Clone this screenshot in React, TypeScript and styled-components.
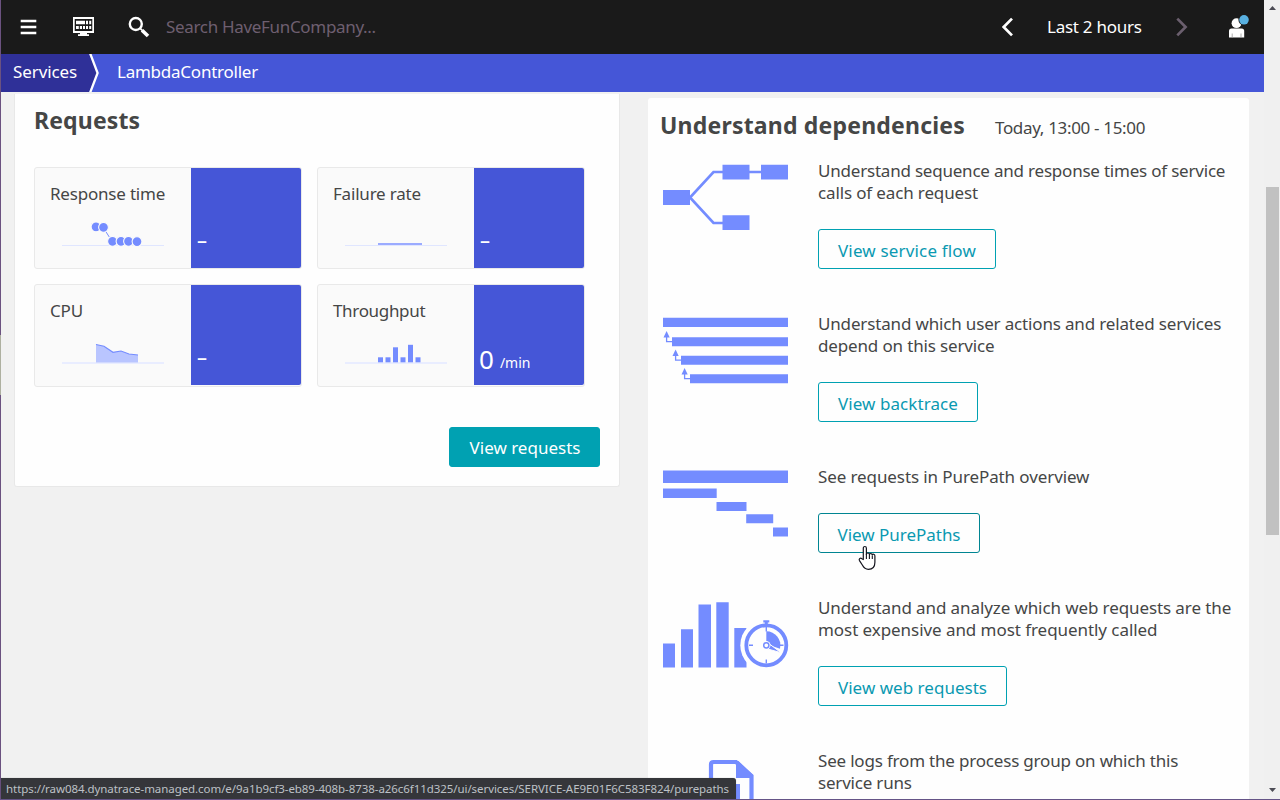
import React from "react";
import styled, { createGlobalStyle } from "styled-components";

const BLUE = "#4556d7";
const ACCENT = "#748cff";
const TEAL = "#00a1b2";

const GlobalStyle = createGlobalStyle`
  * { box-sizing: border-box; }
  html, body { margin: 0; padding: 0; }
  body {
    font-family: "Noto Sans", "Open Sans", sans-serif;
    font-size: 17px;
    line-height: 22px;
    color: #454646;
    overflow: hidden;
  }
  svg { display: block; flex: none; }
`;

const Frame = styled.div`
  position: relative;
  display: flex;
  width: 1280px;
  height: 800px;
  padding-left: 1px;
  border-bottom: 1px solid #655487;
  background:
    linear-gradient(#6b5280 335px, #aeb0a0 335px 395px, #6b5280 395px) 0 0 / 1px 100% no-repeat,
    #f1f1f1;
  overflow: hidden;
`;

const Page = styled.div`
  display: flex;
  flex-direction: column;
  width: 1263px;
  height: 799px;
`;

const Label = styled.span<{ $track?: number }>`
  letter-spacing: ${(p) => p.$track ?? 0}px;
  white-space: pre;
`;

const TopBar = styled.header`
  display: flex;
  flex: none;
  align-items: center;
  height: 54px;
  padding: 0 17px 0 19px;
  background: #1a1a1a;
  color: #fff;
`;

const IconButton = styled.button<{ $gap: number }>`
  display: flex;
  padding: 0;
  margin: 0 ${(p) => p.$gap}px 0 0;
  border: 0;
  background: none;
`;

const SearchField = styled.div`
  flex: 1;
  color: #6e5f70;
`;

const Timeframe = styled.div`
  width: 95px;
  margin-right: 34px;
`;

const Breadcrumb = styled.nav`
  display: flex;
  flex: none;
  height: 38px;
  background: ${BLUE};
  color: #fff;
  line-height: 36px;
`;

const Crumb = styled.div<{ $root?: boolean }>`
  padding-left: ${(p) => (p.$root ? 12 : 18)}px;
  width: ${(p) => (p.$root ? "88px" : "auto")};
  background: ${(p) => (p.$root ? "#2f3098" : "transparent")};
`;

const Content = styled.main`
  display: flex;
  flex: 1;
  align-items: flex-start;
  padding-left: 13px;
  min-height: 0;
`;

const RequestsCard = styled.section`
  width: 606px;
  height: 393px;
  margin-top: 2px;
  padding: 12px 19px 0;
  border: 1px solid #e8e8e8;
  border-top: 0;
  border-radius: 0 0 3px 3px;
  background: #fefefe;
`;

const DependenciesCard = styled.section`
  width: 601px;
  height: 701px;
  margin: 6px 0 0 28px;
  padding: 13px 12px 0;
  border-radius: 3px 3px 0 0;
  background: #fefefe;
  overflow: hidden;
`;

const Title = styled.h2<{ $track?: number }>`
  margin: 0;
  font-size: 23px;
  font-weight: 700;
  line-height: 28px;
  letter-spacing: ${(p) => p.$track ?? 0}px;
`;

const Tiles = styled.div`
  display: grid;
  grid-template-columns: 268px 268px;
  grid-template-rows: 102px 103px;
  gap: 15px;
  margin-top: 33px;
`;

const Tile = styled.article`
  display: flex;
  border: 1px solid #e9e9e9;
  border-radius: 3px;
  background: #fafafa;
`;

const TileInfo = styled.div`
  display: flex;
  flex-direction: column;
  justify-content: space-between;
  width: 156px;
  padding: 15px 0 14px 15px;
  height: 100px;
`;

const TileValue = styled.div`
  display: flex;
  align-items: flex-end;
  gap: 6px;
  width: 110px;
  height: 100px;
  padding: 0 0 10px 5px;
  border-radius: 0 2px 2px 0;
  background: ${BLUE};
  color: #fff;
  font-size: 26px;
  line-height: 32px;
`;

const Dash = styled.span`
  padding: 0 0 8px 1px;
  font-size: 20px;
  font-weight: 500;
  line-height: 20px;
`;

const Unit = styled.span`
  padding-bottom: 1px;
  font-size: 14px;
  line-height: 22px;
`;

const CardActions = styled.div`
  display: flex;
  justify-content: flex-end;
  margin-top: 40px;
`;

const Button = styled.button<{ $primary?: boolean; $hover?: boolean; $width: number }>`
  display: block;
  width: ${(p) => p.$width}px;
  height: 40px;
  padding: ${(p) => (p.$primary ? "2px 0 0 1px" : "4px 0 0")};
  border: 1px solid ${(p) => (p.$hover ? "#008592" : TEAL)};
  border-radius: 3px;
  background: ${(p) => (p.$primary ? TEAL : "#fefefe")};
  color: ${(p) => (p.$primary ? "#fff" : "#0a99b1")};
  font: inherit;
`;

const DependenciesHead = styled.div`
  display: flex;
  align-items: baseline;
  gap: 30px;
  height: 49px;
`;

const Dependency = styled.article`
  display: flex;
  gap: 30px;
  padding: 0 0 44px 3px;
`;

const Drawing = styled.div`
  width: 125px;
  padding-top: 4px;
`;

const Description = styled.p`
  margin: 0 0 25px;
`;

const ScrollBar = styled.div`
  display: flex;
  flex-direction: column;
  align-items: center;
  justify-content: space-between;
  width: 16px;
  height: 799px;
  padding: 5px 0 6px 1px;
  background: #f0f0f0;
`;

const Thumb = styled.div`
  width: 13px;
  height: 348px;
  margin-bottom: 77px;
  background: #c1c1c1;
`;

const StatusBubble = styled.div`
  position: absolute;
  left: 1px;
  bottom: 0;
  width: 735px;
  height: 21px;
  padding-left: 5px;
  border-radius: 0 3px 0 0;
  background: #35363a;
  box-shadow: 0 0 1px rgba(0, 0, 0, 0.4);
  color: #bdc1c6;
  font-size: 11.5px;
  line-height: 21px;
`;

const Pointer = styled.div`
  position: absolute;
  left: 857px;
  top: 545px;
`;

const MenuIcon = () => (
  <svg width="17" height="16" viewBox="0 0 17 16">
    <path d="M.7 2h15.6M.7 8h15.6M.7 14h15.6" stroke="#fff" strokeWidth="2.3" />
  </svg>
);

const DashboardIcon = () => (
  <svg width="21" height="20" viewBox="0 0 21 20">
    <path d="M0 0h21v16h-7v1.3h2V19H5v-1.7h2V16H0z" fill="#fff" />
    <path d="M1.7 2h17.6v12H1.7z" fill="#1a1a1a" />
    <path d="M3 3.800h9V7.200H3zM13 3.800h2V7.200h-2zM16.200 3.800h2V7.200h-2zM3 9h2.800v3H3zM6.800 9h2.200v3H6.800zM10 9h2v3h-2zM13 9h2v3h-2zM16.200 9h2v3h-2z" fill="#fff" />
  </svg>
);

const SearchIcon = () => (
  <svg width="22" height="22" viewBox="0 0 22 22">
    <circle cx="7.8" cy="8" r="6" fill="none" stroke="#fff" strokeWidth="2.4" />
    <path d="m12.2 12.4 2 2" stroke="#fff" strokeWidth="1.8" />
    <path d="m14 14.2 6 5.8" stroke="#fff" strokeWidth="3.6" />
  </svg>
);

const Chevron = ({ forward }: { forward?: boolean }) => (
  <svg width="12" height="20" viewBox="0 0 12 20">
    <path
      d={forward ? "M1.3 1.6 9.6 10l-8.3 8.4" : "M10 1.6 1.7 10l8.3 8.4"}
      fill="none"
      stroke={forward ? "#6b5f6e" : "#fff"}
      strokeWidth="2.7"
    />
  </svg>
);

const UserIcon = () => (
  <svg width="20" height="24" viewBox="0 0 20 24">
    <circle cx="7.5" cy="8.2" r="4.9" fill="#fff" />
    <path d="M0 16q0-2.500 2.500-2.500h10.200q2.500 0 2.500 2.500v6.500H0z" fill="#fff" />
    <path d="M3.200 18.500v4M12 18.500v4" stroke="#999" strokeWidth=".8" />
    <circle cx="15" cy="4.800" r="5.600" fill="#1a1a1a" />
    <circle cx="15" cy="4.800" r="4.800" fill="#58b0e0" />
  </svg>
);

const CrumbArrow = () => (
  <svg width="10" height="38" viewBox="0 0 10 38">
    <path d="M0 0 8.500 19 0 38z" fill="#2f3098" />
    <path d="M1 -1 8.600 19 1 39" fill="none" stroke="#fff" strokeWidth="2.300" />
  </svg>
);

const SPARK_DOTS = [[34.5, 6.800], [42, 7.300], [51, 21.300], [59.500, 21.300], [67, 21.300], [75.500, 21.600]];
const SPARK_BARS = [[33, 5], [40.500, 5], [48, 15], [55.500, 5], [63, 17.500], [70.500, 5]];

const SparkLine = ({ kind }: { kind: string }) => {
  const flat = kind === "dots" || kind === "line";
  return (
    <svg width="130" height="34" viewBox="0 0 130 34">
      <path d={flat ? "M12 25.500h102" : "M12 26h102"} stroke={flat ? "#e0e6ff" : "#e9edff"} strokeWidth={flat ? 1 : 2} />
      {kind === "dots" && (
        <g transform="translate(11.500 0)">
          <path d="M42 8l9 14" stroke={ACCENT} strokeWidth="1" />
          {SPARK_DOTS.map(([x, y]) => (
            <circle key={x} cx={x} cy={y} r="4.900" fill={ACCENT} stroke="#fafafa" strokeWidth="1.100" />
          ))}
        </g>
      )}
      {kind === "line" && <path d="M45 24h44" stroke="#9babff" strokeWidth="2" />}
      {kind === "area" && (
        <>
          <path d="M46 7.500l8 1.800 9 6 8-1.300 8 3 9 1V25.500H46z" fill="#b9c5ff" />
          <path d="M46 7.500l8 1.800 9 6 8-1.300 8 3 9 1" fill="none" stroke={ACCENT} strokeWidth="1.100" />
        </>
      )}
      {kind === "bars" &&
        SPARK_BARS.map(([x, h]) => (
          <rect key={x} x={x + 12} y={25.300 - h} width="5" height={h} fill={ACCENT} />
        ))}
    </svg>
  );
};

const FlowDrawing = () => (
  <svg width="125" height="68" viewBox="0 0 125 68" fill={ACCENT}>
    <path d="M0 26h27v15H0zM59.500 .8h27v14.700h-27zM98 .8h27v14.700H98zM59.500 51.200h27V66h-27z" />
    <path d="M86 8h12M60 8h-9.500L27 33.500 50.500 59H60" fill="none" stroke={ACCENT} strokeWidth="2.700" />
  </svg>
);

const BacktraceDrawing = () => (
  <svg width="125" height="68" viewBox="0 0 125 68" fill={ACCENT}>
    <path d="M0 .700h125v9.200H0zM9 20.300h116v9H9zM18 38.700h107v9H18zM27 57.200h98v9H27z" />
    {[0, 1, 2].map((i) => (
      <g key={i} transform={`translate(${i * 9} ${i * 18.500})`}>
        <path d="M3.600 14 6.700 20.500H.5z" />
        <path d="M3.600 18v6.700H9" fill="none" stroke={ACCENT} strokeWidth="1.300" />
      </g>
    ))}
  </svg>
);

const PurePathDrawing = () => (
  <svg width="125" height="68" viewBox="0 0 125 68" fill={ACCENT}>
    <path d="M0 .600h125v12.300H0zM0 18.400h53.700v9.500H0zM53.500 32.100h30v9h-30zM83.200 44.300h27v9h-27zM110 57.400h15v9h-15z" />
  </svg>
);

const WebRequestsDrawing = () => (
  <svg width="126" height="68" viewBox="0 0 126 68" fill={ACCENT}>
    <path d="M0 42.500h12v24H0zM18 28.300h12v38.200H18zM35.500 3.500H48v63H35.500zM53.300 1.300h12.400v65.200H53.300zM71.300 27h12.200v39.500H71.300z" />
    <circle cx="103.300" cy="44.300" r="26" fill="#fefefe" />
    <circle cx="103.300" cy="44.300" r="20" fill="none" stroke={ACCENT} strokeWidth="3.800" />
    <path d="M100.300 19.300h6v2.300h-1.500v3h-3v-3h-1.500z" />
    <path d="M103.300 30.500V26M103.300 58.500v4M86 44.300h4M116.500 44.300h4" stroke={ACCENT} strokeWidth="1.400" />
    <path d="M103.300 30.300a14 14 0 0 1 13.700 17.400L103.300 43z" />
    <path d="M104.500 41.500 118 51.700 103 47.500z" fill={ACCENT} stroke="#fefefe" strokeWidth="1" />
    <circle cx="103.300" cy="44.300" r="4.200" fill="#fefefe" />
    <circle cx="103.300" cy="44.300" r="2.600" fill="#fefefe" stroke={ACCENT} strokeWidth="1.500" />
  </svg>
);

const LogsDrawing = () => (
  <svg width="125" height="68" viewBox="0 0 125 68" fill={ACCENT}>
    <path d="M48 64V10.500q0-2.500 2.500-2.500H73L88.500 22v44" fill="none" stroke={ACCENT} strokeWidth="4.200" />
    <path d="M73 7h2.500L90 21v3H73z" />
    <path d="M59 30h18v36h-4V34H59z" />
  </svg>
);

const HandPointer = () => (
  <svg width="22" height="26" viewBox="0 0 22 26">
    <path
      d="M6.300 14.500V3.200c0-2.300 3.100-2.300 3.100 0V9.400c.2-2 3-1.800 3 .2.300-1.600 2.900-1.400 2.900.5.400-1.400 2.600-1.100 2.600.8v6.400c0 4-2 7-6.500 7-3.300 0-4.600-1.500-5.900-4l-3-4.700c-1.100-2 1.100-3.100 2.300-1.900z"
      fill="#fff"
      stroke="#15151f"
      strokeWidth="1.200"
      strokeLinejoin="round"
    />
    <path d="M9.400 9v5M12.400 10v4M15.300 10.700V14" stroke="#15151f" strokeWidth="1.100" />
  </svg>
);

const ScrollArrow = ({ down }: { down?: boolean }) => (
  <svg width="9" height="5" viewBox="0 0 9 5">
    <path d={down ? "M1 0h7L4.500 4z" : "M1 5h7L4.500 1z"} fill="#4c4c55" />
  </svg>
);

const TILES = [
  { label: "Response time", track: -0.2, kind: "dots" },
  { label: "Failure rate", track: -0.2, kind: "line" },
  { label: "CPU", track: -0.2, kind: "area" },
  { label: "Throughput", track: -0.33, kind: "bars", value: "0", unit: "/min" },
];

type DependencyItem = {
  drawing: React.FC;
  lines: [string, number][];
  action?: { label: string; track: number; width: number; hover?: boolean };
};

const DEPENDENCIES: DependencyItem[] = [
  {
    drawing: FlowDrawing,
    lines: [["Understand sequence and response times of service", -0.21], ["calls of each request", -0.14]],
    action: { label: "View service flow", track: 0.17, width: 178 },
  },
  {
    drawing: BacktraceDrawing,
    lines: [["Understand which user actions and related services", -0.16], ["depend on this service", -0.15]],
    action: { label: "View backtrace", track: 0.08, width: 160 },
  },
  {
    drawing: PurePathDrawing,
    lines: [["See requests in PurePath overview", -0.1]],
    action: { label: "View PurePaths", track: -0.02, width: 162, hover: true },
  },
  {
    drawing: WebRequestsDrawing,
    lines: [["Understand and analyze which web requests are the", -0.1], ["most expensive and most frequently called", -0.06]],
    action: { label: "View web requests", track: 0.02, width: 189 },
  },
  {
    drawing: LogsDrawing,
    lines: [["See logs from the process group on which this", -0.19], ["service runs", -0.2]],
  },
];

export default function App() {
  return (
    <>
      <GlobalStyle />
      <Frame>
        <Page>
          <TopBar>
            <IconButton $gap={36} aria-label="Menu"><MenuIcon /></IconButton>
            <IconButton $gap={34} aria-label="Dashboards"><DashboardIcon /></IconButton>
            <IconButton $gap={16} aria-label="Search"><SearchIcon /></IconButton>
            <SearchField><Label $track={-0.32}>Search HaveFunCompany...</Label></SearchField>
            <IconButton $gap={33} aria-label="Earlier"><Chevron /></IconButton>
            <Timeframe><Label $track={-0.27}>Last 2 hours</Label></Timeframe>
            <IconButton $gap={41} aria-label="Later"><Chevron forward /></IconButton>
            <IconButton $gap={-2} aria-label="User"><UserIcon /></IconButton>
          </TopBar>
          <Breadcrumb>
            <Crumb $root><Label $track={-0.1}>Services</Label></Crumb>
            <CrumbArrow />
            <Crumb><Label $track={-0.24}>LambdaController</Label></Crumb>
          </Breadcrumb>
          <Content>
            <RequestsCard>
              <Title $track={0.15}>Requests</Title>
              <Tiles>
                {TILES.map((t) => (
                  <Tile key={t.label}>
                    <TileInfo>
                      <Label $track={t.track}>{t.label}</Label>
                      <SparkLine kind={t.kind} />
                    </TileInfo>
                    <TileValue>
                      {t.value ? <>{t.value}<Unit>{t.unit}</Unit></> : <Dash>–</Dash>}
                    </TileValue>
                  </Tile>
                ))}
              </Tiles>
              <CardActions>
                <Button $primary $width={151}>View requests</Button>
              </CardActions>
            </RequestsCard>
            <DependenciesCard>
              <DependenciesHead>
                <Title $track={0.2}>Understand dependencies</Title>
                <Label $track={-0.33}>Today, 13:00 - 15:00</Label>
              </DependenciesHead>
              {DEPENDENCIES.map((d) => (
                <Dependency key={d.lines[0][0]}>
                  <Drawing><d.drawing /></Drawing>
                  <div>
                    <Description>
                      {d.lines.map(([text, track], i) => (
                        <React.Fragment key={text}>
                          {i > 0 && <br />}
                          <Label $track={track}>{text}</Label>
                        </React.Fragment>
                      ))}
                    </Description>
                    {d.action && (
                      <Button $width={d.action.width} $hover={d.action.hover}>
                        <Label $track={d.action.track}>{d.action.label}</Label>
                      </Button>
                    )}
                  </div>
                </Dependency>
              ))}
            </DependenciesCard>
          </Content>
        </Page>
        <ScrollBar>
          <ScrollArrow />
          <Thumb />
          <ScrollArrow down />
        </ScrollBar>
        <StatusBubble>
          <Label $track={-0.065}>https://raw084.dynatrace-managed.com/e/9a1b9cf3-eb89-408b-8738-a26c6f11d325/ui/services/SERVICE-AE9E01F6C583F824/purepaths</Label>
        </StatusBubble>
        <Pointer><HandPointer /></Pointer>
      </Frame>
    </>
  );
}
